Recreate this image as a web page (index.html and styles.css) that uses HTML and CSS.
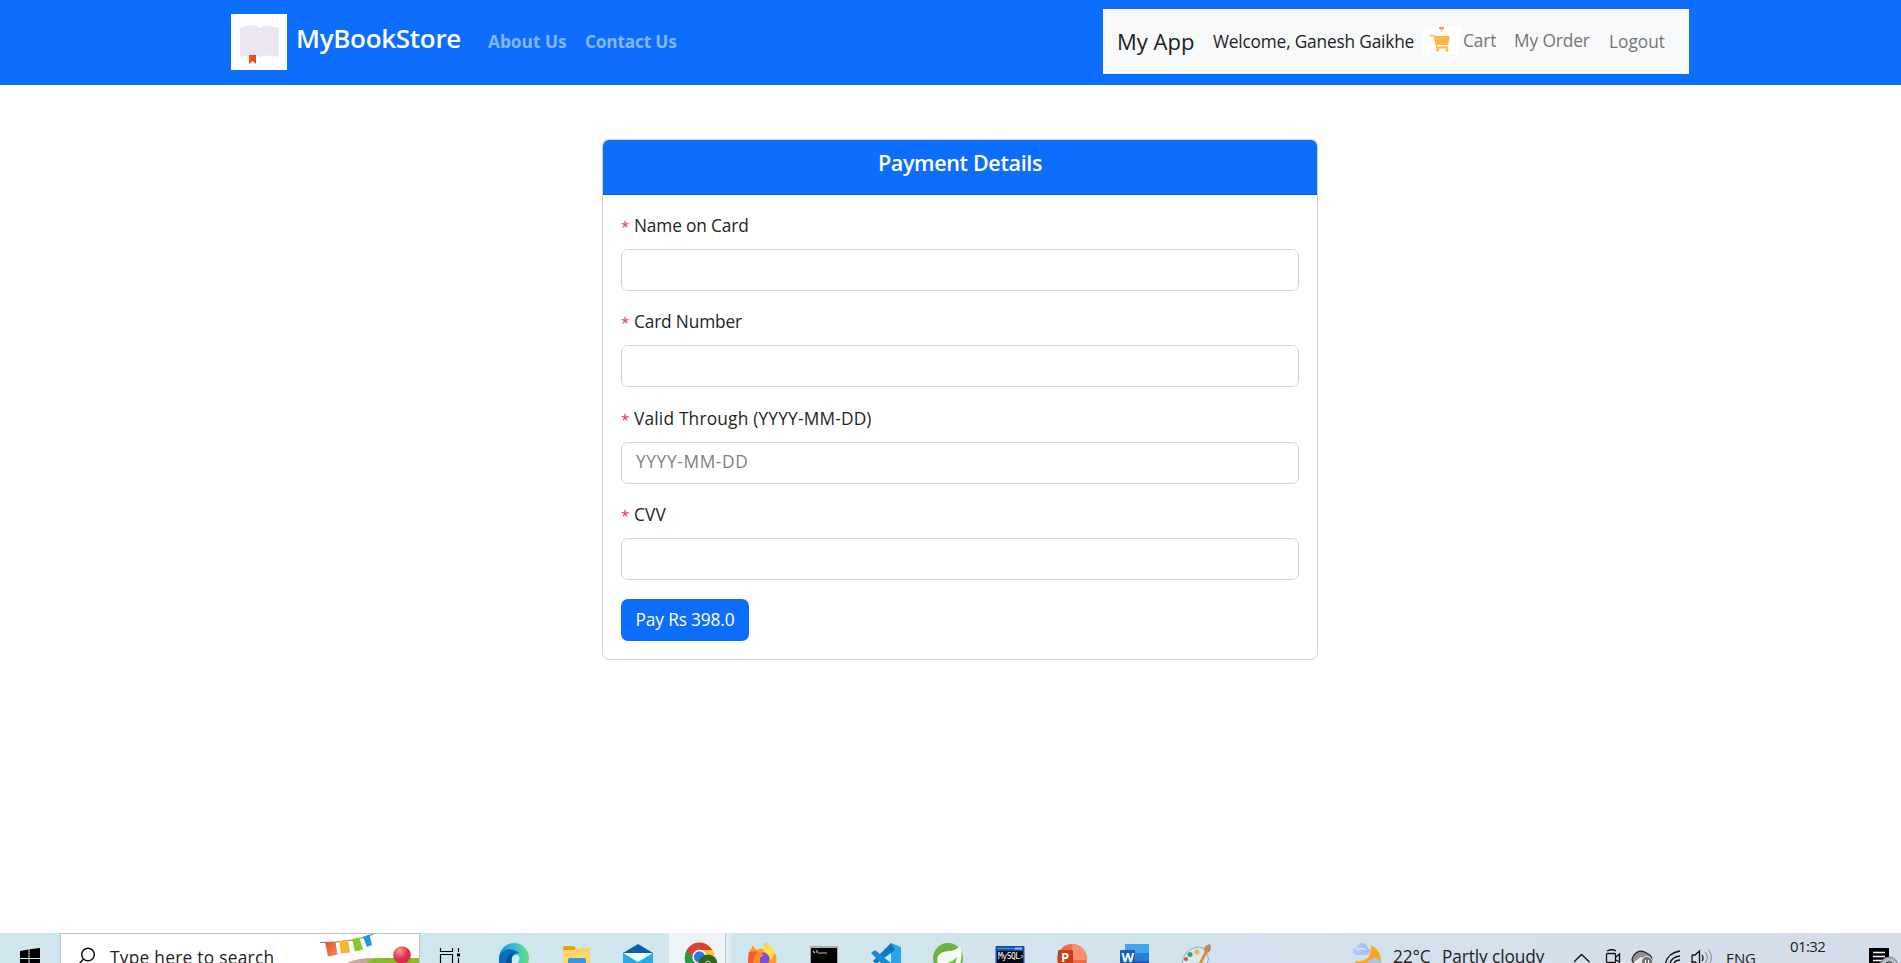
FILE: index.html
```html
<!DOCTYPE html>
<html lang="en">
<head>
<meta charset="utf-8">
<title>MyBookStore - Payment</title>
<link rel="stylesheet" href="styles.css">
</head>
<body>
<header class="navbar">
  <div class="brand-group">
    <svg class="logo" width="56" height="56" viewBox="0 0 56 56">
      <rect width="56" height="56" fill="#fff"/>
      <path d="M9 14Q19 10 26 12L28.500 13.500L31 12Q39 11 48 14V43Q38 40 28.500 43Q19 40 9 43Z" fill="#ebe6f0"/>
      <path d="M18 41H25V50L21.500 47L18 50Z" fill="#e64a19"/>
      <path d="M18 41H21V47.500L18 50Z" fill="#f4511e"/>
    </svg>
    <span class="brand">MyBookStore</span>
    <a class="link about">About Us</a>
    <a class="link contact">Contact Us</a>
  </div>
  <nav class="account">
    <span class="app">My App</span>
    <span class="welcome">Welcome, Ganesh Gaikhe</span>
    <svg class="cart-icon" width="36" height="27" viewBox="0 0 36 27">
      <rect width="36" height="27" fill="#fff"/>
      <path d="M16 0H21V1.500L18.500 3.500L16 1.500Z" fill="#e9a23b"/>
      <path d="M18.500 2V5.500" stroke="#f3c67c" stroke-width="1.300"/>
      <path d="M7 8.500H11L14 20.500H25" fill="none" stroke="#ffb74d" stroke-width="1.300"/>
      <path d="M11 9H27L25 18H13Z" fill="#ffb74d"/>
      <path d="M13 20.500H25" stroke="#ffb74d" stroke-width="2"/>
      <circle cx="14.500" cy="23" r="1.600" fill="#ffb74d"/><circle cx="24" cy="23" r="1.600" fill="#ffb74d"/>
    </svg>
    <a class="item cart">Cart</a>
    <a class="item order">My Order</a>
    <a class="item logout">Logout</a>
  </nav>
</header>

<main class="card">
  <h1 class="card-header"><span>Payment Details</span></h1>
  <form class="card-body">
    <div class="field"><label><i>*</i><span>Name on Card</span></label><input type="text"></div>
    <div class="field"><label><i>*</i><span>Card Number</span></label><input type="text"></div>
    <div class="field"><label><i>*</i><span class="wide">Valid Through (YYYY-MM-DD)</span></label><input type="text" placeholder="YYYY-MM-DD"></div>
    <div class="field"><label><i>*</i><span class="wide">CVV</span></label><input type="text"></div>
    <button type="button" class="pay">Pay Rs 398.0</button>
  </form>
</main>

<footer class="taskbar">
  <svg width="60" height="30" viewBox="0 0 60 30"><path d="M20 18L28.500 16.500V25H20ZM29.500 16.300L40 15V25H29.500ZM20 26H28.500V34H20ZM29.500 26H40V34H29.500Z"/></svg>
  <div class="search">
    <svg width="49" height="29" viewBox="61 1 49 29"><circle cx="88" cy="21.500" r="6.300" fill="none" stroke="#111" stroke-width="1.500"/><path d="M83.500 26L79 31" stroke="#111" stroke-width="1.500"/></svg>
    <span class="search-text">Type here to search</span>
    <svg class="party" width="105" height="29" viewBox="314 1 105 29">
      <defs>
        <linearGradient id="red" x2="1" y2="1"><stop stop-color="#e8502c"/><stop offset="1" stop-color="#f58a55"/></linearGradient>
        <radialGradient id="ball" cx=".35" cy=".25"><stop stop-color="#ff9b84"/><stop offset="1" stop-color="#d92d50"/></radialGradient>
      </defs>
      <path d="M346 31Q355 25 372 25H420V31Z" fill="#c6a6a0"/>
      <path d="M366 31Q370 25 382 25H420V31Z" fill="#8cb82b"/>
      <path d="M320 9.500Q350 10 374 1" fill="none" stroke="#777" stroke-width="1"/>
      <path d="M325 9L335.500 9L337.500 21.500L328 23.500Z" fill="url(#red)"/>
      <path d="M339 8L348 7L350 19.500L341 20.500Z" fill="#f5b52e"/>
      <path d="M352 6L359.500 4.500L363 16.500L355 18.500Z" fill="#8ac926"/>
      <path d="M363 4L369.500 1.500L372 12L367 14Z" fill="#2196dc"/>
      <circle cx="402" cy="22" r="8.800" fill="url(#ball)"/>
    </svg>
  </div>
  <svg class="view" width="63" height="30" viewBox="420 0 63 30"><g fill="none" stroke="#000" stroke-width="1.200"><path d="M440.500 15V18.500H452.500V15M440.500 31V21.500H452.500V31M458.500 15V19M458.500 25V30"/></g><rect x="457" y="20.500" width="3" height="3"/></svg>
  <div class="apps">
    <svg viewBox="-31 0 62 30">
      <defs><linearGradient id="ed"><stop stop-color="#1694d8"/><stop offset=".5" stop-color="#35c0db"/><stop offset="1" stop-color="#6ae36b"/></linearGradient></defs>
      <circle cy="25" r="15" fill="url(#ed)"/><path d="M-15 25C-13 15-1 14 5 20Q-3 20-3 30H-15Z" fill="#0b6abb"/><path d="M-8 30Q-7 21 0 20Q-4 24-2 30Z" fill="#074f96"/><path d="M-2 30V25Q0 21 4 22Q7 25 4 30Z" fill="#d3edf4"/>
    </svg>
    <svg viewBox="-31 0 62 30"><path d="M-13 15Q-13 13-11 13H-2L1 17H-13Z" fill="#e0a30c"/><path d="M-13 17H-2L1 15H14V31H-13Z" fill="#ffd56b"/><path d="M-8 31V27Q-8 25-6 25H8Q10 25 10 27V31Z" fill="#3b94dc"/></svg>
    <svg viewBox="-31 0 62 30"><path d="M-15 20L0 11L15 20V31H-15Z" fill="#0d5ea8"/><path d="M-14 20H14V31H-14Z" fill="#f4f7fa"/><path d="M-15 20L0 29L15 20V31H-15Z" fill="#29a9e3"/></svg>
    <svg class="active" viewBox="-31 0 62 30"><circle cx="-.5" cy="24" r="14.500" fill="#dd4033"/><path d="M-13 17L-6 27L-5 31H-14Q-17 24-13 17Z" fill="#259b48"/><path d="M0 17H13Q15 22 14 27H4Z" fill="#fdc52e"/><circle cx="-.5" cy="24" r="7.200" fill="#fff"/><circle cx="-.5" cy="24" r="5.700" fill="#2979df"/><circle cx="8" cy="31" r="9.500" fill="#32631f"/><path d="M6 31Q5 28 8 28Q11 28 10 31" fill="none" stroke="#c7d8bf"/></svg>
    <svg viewBox="-31 0 62 30"><path d="M-14 30Q-15 19-10 15V12Q-7 14-6 17Q0 14 4 18Q0 11 4 10Q12 16 14 23Q15 27 14 31Z" fill="#ff9b2e"/><path d="M1 17Q2 12 5 10Q10 14 13 20L9 27Z" fill="#ffdd43"/><path d="M-13 19L-5 18L-3 30H-14Z" fill="#fa5a33"/><circle cx="1" cy="26" r="6.500" fill="#7650d8"/><path d="M-7 22Q-2 18 2 22L-2 25V30H-9Z" fill="#ff8b28"/></svg>
    <svg viewBox="-31 0 62 30"><path d="M-14 13H14V31H-14Z" fill="#aaa"/><path d="M-13 15H13V31H-13Z" fill="#050505"/><path d="M-11 18L-9 20M-7 17V20M-6 20H3" stroke="#bbb" stroke-width="1.200"/></svg>
    <svg viewBox="-31 0 62 30"><path d="M5 10L15 14V31H5Z" fill="#29a5ee"/><path d="M5 10L-13 28L-10 31L9 17Z" fill="#087bc4"/><path d="M-15 20L-11 17L6 31H-4Z" fill="#168bd4"/></svg>
    <svg viewBox="-31 0 62 30"><circle cx="0" cy="25" r="15" fill="#6db33f"/><path d="M-10 31Q-14 19 2 18Q9 17 12 13Q15 22 12 31Z" fill="#f5faf2"/><path d="M-5 31Q4 30 9 24L7 31Z" fill="#6db33f"/></svg>
    <svg viewBox="-31 0 62 30"><rect x="-14.500" y="13" width="29" height="20" rx="1" fill="#164fa3"/><path d="M-13 15.500H5" stroke="#4b91e2"/><path d="M5 15.500H12" stroke="#9cc7f2" stroke-width="2"/><path d="M-13 18H13V31H-13Z" fill="#050914"/><text x="-12" y="25.500" class="mysql">MySQL›</text></svg>
    <svg viewBox="-31 0 62 30"><circle cx="0" cy="26" r="15" fill="#ed6c47"/><path d="M0 11A15 15 0 0 1 15 27H0Z" fill="#ff8f6b"/><rect x="-14" y="17" width="15" height="16" rx="1" fill="#c43e1c"/><text x="-11" y="29" class="office">P</text></svg>
    <svg viewBox="-31 0 62 30"><path d="M-9 11H15V20H-9Z" fill="#41a5ee"/><path d="M-9 20H15V28H-9Z" fill="#2b7cd3"/><path d="M-9 28H15V31H-9Z" fill="#185abd"/><rect x="-14" y="17" width="15" height="16" rx="1" fill="#185abd"/><text x="-12.500" y="29" class="office">W</text></svg>
    <svg viewBox="-31 0 62 30"><path d="M-14 31Q-13 17 1 14Q10 14 11 21Q14 26 11 31Z" fill="#d9e8f0" stroke="#8da8b8"/><circle cx="-10" cy="26" r="2" fill="#d84a3c"/><circle cx="-6" cy="21.500" r="2.500" fill="#42a352"/><circle cx="1" cy="19" r="2.500" fill="#efb733"/><path d="M4 31L10 19" stroke="#df8f38" stroke-width="3"/><path d="M8 18Q7 13 14 11L15 14Q15 19 11 20Z" fill="#b98b5d"/></svg>
  </div>
  <svg class="weather" width="30" height="30" viewBox="1353 0 30 30"><path d="M1371 12Q1381 17 1381 28L1380 31H1356L1355 28Q1372 30 1371 12Z" fill="#f7a81b"/><path d="M1357 22Q1353 21 1353 18Q1353 15 1357 15Q1358 10 1362 10Q1367 10 1368 15Q1371 16 1370 20L1367 22Z" fill="#abc4f2"/><path d="M1356 17Q1361 14 1366 17" fill="none" stroke="#dce8ff" stroke-width="1.500"/><path d="M1367 31Q1369 26 1374 25Q1378 25 1379 28L1382 30V31Z" fill="#a8c2f3"/></svg>
  <span class="temp">22°C</span><span class="cloudy">Partly cloudy</span>
  <svg width="152" height="30" viewBox="1574 0 152 30">
    <g fill="none" stroke="#111" stroke-width="1.300">
      <path d="M1574 29L1581.500 21.500L1589.500 29M1607 18Q1612 15.500 1616 18"/>
      <rect x="1606.500" y="20.500" width="9" height="9" rx="1"/><path d="M1616 24L1619.500 21V29L1616 27"/>
      <path d="M1665.500 30Q1668 20 1680 18M1670 30Q1672 24 1680 23M1674 30Q1676 27 1680 27"/>
      <path d="M1692 22H1695L1699.500 18V31M1692 22V29H1695L1699 32M1702 22Q1704 25 1702 28"/>
    </g>
    <path d="M1705 19Q1710 25 1705 30M1708.500 16.500Q1714 25 1709 31" fill="none" stroke="#9299a3" stroke-width="1.200"/>
    <path d="M1634 30Q1630 27 1634 22Q1640 15 1648 21Q1652 22 1652 28V31Z" fill="#929292" stroke="#222" stroke-width="1.200"/><path d="M1634 29L1641 24L1646 26L1643 31H1634Z" fill="#eee"/><circle cx="1647" cy="29" r="5.500" fill="#727272" stroke="#ddd"/><path d="M1645.500 27V31M1648.500 27V31" stroke="#fff"/>
  </svg>
  <span class="lang">ENG</span>
  <span class="clock">01:32</span>
  <svg class="notice" width="32" height="30" viewBox="1869 0 32 30"><path d="M1869 15H1889V31H1869Z"/><path d="M1873 19.500H1885M1873 23.500H1885M1873 27.500H1882" stroke="#fff" stroke-width="1.300"/><circle cx="1889" cy="33" r="9" fill="#b5bbc5" stroke="#727780"/><path d="M1886 30Q1889 27 1892 30" fill="none" stroke="#222"/></svg>
</footer>
</body>
</html>
```
FILE: styles.css
```css
* { box-sizing: border-box; }
html { height: 100%; overflow: hidden; }
body {
  margin: 0;
  height: 100%;
  display: flex;
  flex-direction: column;
  overflow: hidden;
  background: #fff;
  color: #212529;
  font: 17.3px/26px "Open Sans", "Noto Sans", sans-serif;
}
svg { display: block; flex: none; }
span, a { white-space: nowrap; flex: none; }

.navbar {
  height: 85px;
  flex: none;
  display: flex;
  justify-content: space-between;
  align-items: flex-start;
  padding: 9px 212px 0 231px;
  background: #0d6efd;
}
.brand-group { display: flex; padding-top: 5px; }
.brand { margin: 8px 0 0 9px; width: 192px; color: #fff; font-size: 26px; line-height: 32px; font-weight: 600; letter-spacing: -0.3px; }
.link { padding-top: 15px; color: #86b7fe; font-weight: 700; letter-spacing: -0.2px; }
.about { width: 97px; letter-spacing: 0; }
.account { width: 586px; height: 65px; display: flex; padding: 0 0 0 14px; background: #f8f9fa; }
.app { width: 96px; padding-top: 19px; font-size: 22px; letter-spacing: 0; color: #1b1d1f; }
.welcome { width: 210px; padding-top: 20px; letter-spacing: -0.18px; color: #1b1d1f; }
.cart-icon { margin-top: 18px; }
.item { padding-top: 19px; color: #747576; letter-spacing: -0.1px; }
.cart { margin-left: 4px; width: 51px; }
.order { width: 95px; }
.logout { padding-top: 20px; letter-spacing: 0; }

.card {
  width: 716px;
  height: 521px;
  flex: none;
  margin: 54px 0 0 602px;
  border: 1px solid #ced0d3;
  border-radius: 7px;
  overflow: hidden;
}
.card-header {
  height: 55px;
  margin: 0;
  padding-top: 10px;
  border-bottom: 1px solid #0b5fdc;
  background: #0d6efd;
  color: #fff;
  font-size: 21.5px;
  font-weight: 600;
  text-align: center;
  letter-spacing: -0.35px;
}
.card-body { padding: 17px 18px; }
.field { height: 96.4px; }
label { display: flex; height: 37px; padding-top: 1px; letter-spacing: -0.15px; }
label i { width: 13px; color: #dc3545; font-style: normal; font-size: 15px; }
.wide { letter-spacing: 0.2px; }
input {
  display: block;
  width: 678px;
  height: 42px;
  border: 1px solid #ced4da;
  border-radius: 7px;
  padding: 0 13px 2px 14px;
  font: inherit;
  letter-spacing: 0.65px;
}
input::placeholder { color: #7b8188; opacity: 1; }
.pay {
  display: block;
  width: 128px;
  height: 42px;
  margin-top: 1.4px;
  padding: 0;
  border: 0;
  border-radius: 7px;
  background: #0d6efd;
  color: #fff;
  font: inherit;
  letter-spacing: -0.15px;
}

.taskbar {
  height: 30px;
  flex: none;
  margin-top: auto;
  display: flex;
  overflow: hidden;
  background: linear-gradient(90deg, #cfe6ee 0%, #d0e6ef 40%, #d3e1ed 70%, #d5dcea 100%);
  color: #202225;
}
.search { width: 360px; height: 30px; display: flex; flex: none; overflow: hidden; border: 1px solid #c0c2c4; border-bottom: 0; background: #fff; }
.search-text { width: 204px; padding-top: 11px; letter-spacing: 0.28px; }
.apps { display: flex; flex: none; }
.apps svg { width: 62px; height: 30px; }
.apps .active { width: 62px; background: #edf4f8; box-shadow: inset -5px 0 #e0edf3, inset -6px 0 #b8cfd9; }
.mysql { font: 8px "DejaVu Sans Mono", monospace; fill: #fff; letter-spacing: -0.5px; }
.office { font: 700 13px "Open Sans", sans-serif; fill: #fff; }
.weather { margin-left: 126px; }
.temp { width: 49px; margin-left: 10px; padding-top: 11px; letter-spacing: -0.1px; }
.cloudy { width: 132px; padding-top: 11px; letter-spacing: -0.1px; }
.lang { width: 64px; padding-top: 12px; font-size: 15px; letter-spacing: -0.3px; }
.clock { width: 79px; font-size: 15px; letter-spacing: -0.6px; }
```
